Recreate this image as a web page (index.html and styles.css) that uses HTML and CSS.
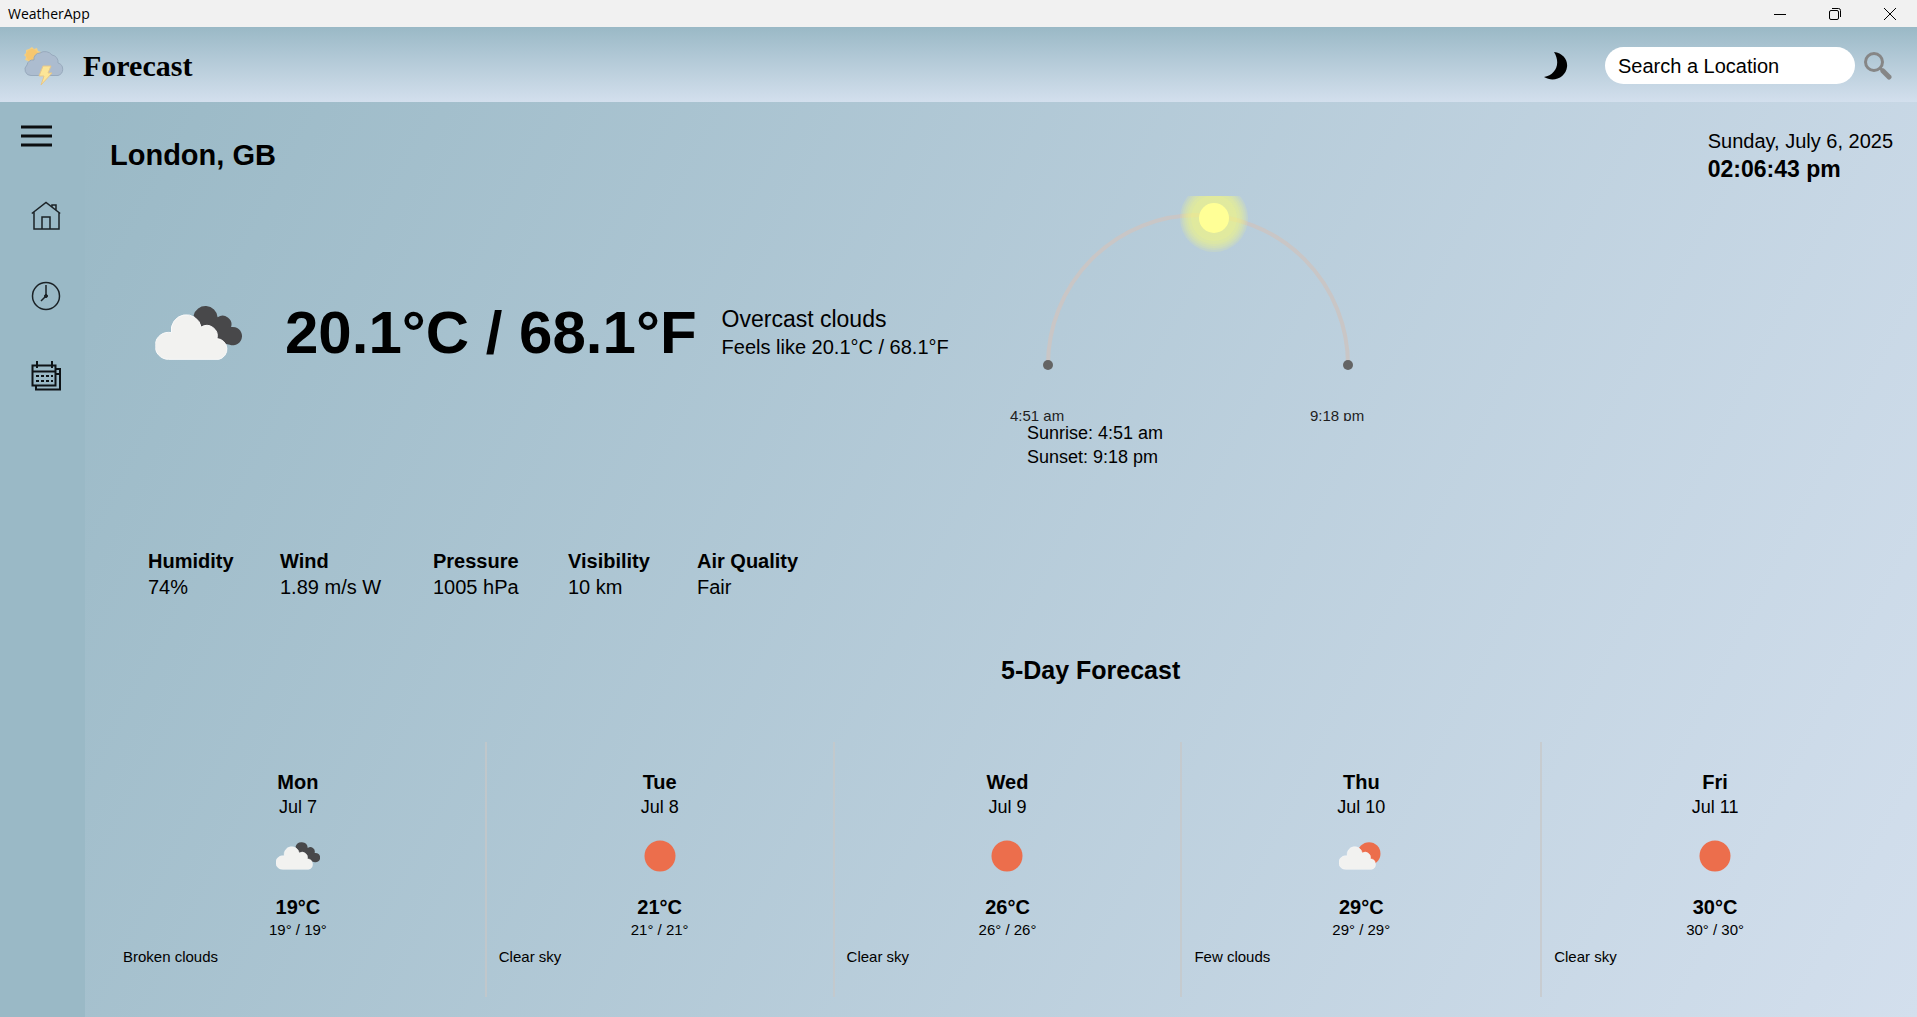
FILE: index.html
```html
<!DOCTYPE html>
<html lang="en">
<head>
<meta charset="utf-8">
<meta name="viewport" content="width=device-width, initial-scale=1">
<title>WeatherApp</title>
<link rel="stylesheet" href="styles.css">
</head>
<body>
<svg class="sprite" aria-hidden="true">
  <symbol id="white-cloud" viewBox="464 376 262 164">
    <path fill="#f2f2f0" stroke="#fafafa" stroke-width="3" d="M504 538A41 41 0 1 1 513 457A45.500 45.500 0 0 1 603 440A32 32 0 0 1 651 475A32 32 0 0 1 657 538Z"/>
  </symbol>
  <symbol id="broken-clouds" viewBox="464 376 262 164">
    <path fill="#48484a" d="M580 405A37 37 0 0 1 653 410A27 27 0 0 1 694 440A28 28 0 1 1 690 494L651 485L603 450Z"/>
    <use href="#white-cloud" x="464" y="376" width="262" height="164"/>
  </symbol>
  <symbol id="few-clouds" viewBox="464 376 262 164">
    <circle cx="643" cy="444" r="68" fill="#ec6e4c"/>
    <use href="#white-cloud" x="464" y="376" width="262" height="164"/>
  </symbol>
  <symbol id="clear-sky" viewBox="0 0 32 32">
    <circle cx="16" cy="16" r="15.500" fill="#ec6e4c"/>
  </symbol>
</svg>

<div class="titlebar">
  <span class="titlebar-name">WeatherApp</span>
  <div class="window-buttons">
    <button type="button" aria-label="Minimize"><svg width="14" height="14" viewBox="0 0 14 14"><path d="M1 7.500h12"/></svg></button>
    <button type="button" aria-label="Restore"><svg width="14" height="14" viewBox="0 0 14 14"><rect x="1.500" y="3.500" width="9" height="9" rx="1.500"/><path d="M4 1.500h6.500a2 2 0 0 1 2 2V10"/></svg></button>
    <button type="button" aria-label="Close"><svg width="14" height="14" viewBox="0 0 14 14"><path d="M1 1l12 12M13 1L1 13"/></svg></button>
  </div>
</div>

<header class="header">
  <svg class="logo" width="42" height="40" viewBox="0 0 42 40" aria-hidden="true">
    <path fill="#f3cf83" d="M9 1l2 2 3-1 1 3 3 1-1 3 2 2-3 2 0 3-3 0-2 3-2-2-3 1-1-3-3-1 1-3-2-2 2-2 0-3 3-1z"/>
    <circle cx="9" cy="9" r="6" fill="#f7c76f"/>
    <path fill="#acbccf" stroke="#98aabd" d="M8 29.500A6 6 0 0 1 4 19A6 6 0 0 1 11 14A6 6 0 0 1 17 7A9 9 0 0 1 29 9A7 7 0 0 1 35 17A6.500 6.500 0 0 1 35 29.500Z"/>
    <path fill="#fce597" stroke="#e6c78b" d="M20 20h8l-3 7h4L18 39l3-9h-5z"/>
  </svg>
  <h1 class="brand">Forecast</h1>
  <button type="button" class="theme-toggle" aria-label="Dark mode"><svg width="24" height="28" viewBox="0 0 24 28"><path d="M10 0C19 1 24 8 23 15C22 25 10 31 0 25C12 23 17 11 10 0Z"/></svg></button>
  <form class="search">
    <input type="text" aria-label="Search a Location" placeholder="Search a Location">
    <button type="button" aria-label="Search"><svg width="28" height="28" viewBox="0 0 28 28" fill="none" stroke="#868686"><circle cx="10" cy="10" r="8.500" stroke-width="3"/><path d="M16 16l3 3" stroke-width="3"/><path d="M19 19l6 6" stroke-width="5" stroke-linecap="round"/></svg></button>
  </form>
</header>

<div class="layout">
  <nav class="sidebar" aria-label="Sections">
    <button type="button" class="menu" aria-label="Menu"><svg width="31" height="24" viewBox="0 0 31 24"><path stroke="#0b0e10" stroke-width="3" d="M0 3h31M0 12h31M0 21h31"/></svg></button>
    <a href="#current" aria-label="Home"><svg width="30" height="30" viewBox="0 0 30 30" fill="none" stroke="#1b2226"><path stroke-width="1.500" d="M.8 12.500L15 1.500L29.200 12.500M3 11v17h25V11M11 28V16h8v12M21 6V4h4v5"/></svg></a>
    <a href="#stats" aria-label="Hourly"><svg width="30" height="30" viewBox="0 0 30 30" fill="none" stroke="#1b2226"><circle cx="15" cy="15" r="13.500" stroke-width="1.500"/><path stroke-width="1.500" d="M15 4v11l-5 5"/><circle cx="15" cy="15" r="1.500" fill="#1b2226"/></svg></a>
    <a href="#forecast" aria-label="Daily"><svg width="30" height="30" viewBox="0 0 30 30" fill="none" stroke="#0e1316" stroke-width="2"><path d="M1.500 4.500h23v20h-23zM1.500 10.500h23M6 0v7M21 0v7M25 8h4v20.500H5v-4M25 13h4"/><path stroke-dasharray="3 2" d="M5 15h17M5 20h17"/></svg></a>
  </nav>

  <main class="main">
    <div class="top">
      <h2 class="place">London, GB</h2>
      <div class="clock">
        <p class="date">Sunday, July 6, 2025</p>
        <p class="time">02:06:43 pm</p>
      </div>
    </div>

    <section class="current" id="current">
      <div class="now">
        <svg width="87" height="54" role="img" aria-label="Overcast clouds"><use href="#broken-clouds"/></svg>
        <p class="now-temp">20.1°C / 68.1°F</p>
        <div class="now-text">
          <p class="now-sky">Overcast clouds</p>
          <p class="now-feels">Feels like 20.1°C / 68.1°F</p>
        </div>
      </div>
      <div class="sun">
        <svg class="sun-path" width="380" height="225" viewBox="0 0 380 225">
          <path d="M47 169a150 150 0 0 1 300 0" fill="none" stroke="#c9c6c6" stroke-width="4"/>
          <circle cx="47" cy="169" r="5" fill="#646464"/>
          <circle cx="347" cy="169" r="5" fill="#646464"/>
          <g fill="#ffff78" fill-opacity="0.140">
            <circle cx="213" cy="22" r="34"/><circle cx="213" cy="22" r="32"/><circle cx="213" cy="22" r="30"/><circle cx="213" cy="22" r="28"/><circle cx="213" cy="22" r="26"/><circle cx="213" cy="22" r="23"/>
          </g>
          <circle cx="213" cy="22" r="15" fill="#ffff96"/>
          <text x="9" y="225">4:51 am</text>
          <text x="309" y="225">9:18 pm</text>
        </svg>
        <p class="sun-time">Sunrise: 4:51 am</p>
        <p class="sun-time">Sunset: 9:18 pm</p>
      </div>
    </section>

    <dl class="stats" id="stats">
      <div><dt>Humidity</dt><dd>74%</dd></div>
      <div><dt>Wind</dt><dd>1.89 m/s W</dd></div>
      <div><dt>Pressure</dt><dd>1005 hPa</dd></div>
      <div><dt>Visibility</dt><dd>10 km</dd></div>
      <div><dt>Air Quality</dt><dd>Fair</dd></div>
    </dl>

    <h2 class="forecast-title">5-Day Forecast</h2>
    <section class="forecast" id="forecast">
      <article class="day">
        <h3>Mon</h3><p class="day-date">Jul 7</p>
        <div class="day-icon"><svg width="44" height="28"><use href="#broken-clouds"/></svg></div>
        <p class="day-temp">19°C</p><p class="day-range">19° / 19°</p><p class="day-sky">Broken clouds</p>
      </article>
      <article class="day">
        <h3>Tue</h3><p class="day-date">Jul 8</p>
        <div class="day-icon"><svg width="32" height="32"><use href="#clear-sky"/></svg></div>
        <p class="day-temp">21°C</p><p class="day-range">21° / 21°</p><p class="day-sky">Clear sky</p>
      </article>
      <article class="day">
        <h3>Wed</h3><p class="day-date">Jul 9</p>
        <div class="day-icon"><svg width="32" height="32"><use href="#clear-sky"/></svg></div>
        <p class="day-temp">26°C</p><p class="day-range">26° / 26°</p><p class="day-sky">Clear sky</p>
      </article>
      <article class="day">
        <h3>Thu</h3><p class="day-date">Jul 10</p>
        <div class="day-icon"><svg width="44" height="28"><use href="#few-clouds"/></svg></div>
        <p class="day-temp">29°C</p><p class="day-range">29° / 29°</p><p class="day-sky">Few clouds</p>
      </article>
      <article class="day">
        <h3>Fri</h3><p class="day-date">Jul 11</p>
        <div class="day-icon"><svg width="32" height="32"><use href="#clear-sky"/></svg></div>
        <p class="day-temp">30°C</p><p class="day-range">30° / 30°</p><p class="day-sky">Clear sky</p>
      </article>
    </section>
  </main>
</div>
</body>
</html>
```
FILE: styles.css
```css
* { box-sizing: border-box; }

body {
  margin: 0;
  min-height: 100vh;
  display: flex;
  flex-direction: column;
  font-family: "Liberation Sans", Arial, sans-serif;
  font-size: 20px;
  line-height: 26px;
  color: #000;
}

h1, h2, h3, p, dl, dd { margin: 0; }
h3 { font-size: 20px; }
svg { display: block; }
button { border: 0; padding: 0; background: none; cursor: pointer; }

.sprite { display: none; }

/* Window frame */
.titlebar {
  height: 27px;
  flex: none;
  display: flex;
  align-items: center;
  justify-content: space-between;
  padding: 0 20px 0 8px;
  background: #f1f1f1;
}
.titlebar-name { font: 14px/20px "Open Sans", sans-serif; }
.window-buttons { display: flex; gap: 41px; }
.window-buttons svg { fill: none; stroke: #000; }

/* Header */
.header {
  height: 75px;
  flex: none;
  display: flex;
  align-items: center;
  padding: 2px 25px 0 23px;
  background: linear-gradient(#9ab9c6, #d3dfed);
}
.brand {
  margin-left: 18px;
  font: bold 30px/36px "Liberation Serif", "Times New Roman", serif;
}
.theme-toggle { margin-left: auto; margin-right: 37px; }
.search { display: flex; align-items: center; gap: 9px; }
.search input {
  width: 250px;
  height: 37px;
  border: 0;
  border-radius: 19px;
  padding: 2px 13px 0;
  font: 20px/26px "Liberation Sans", Arial, sans-serif;
  background: #fff;
}
.search input::placeholder { color: #000; opacity: 1; }

.layout { flex: 1; display: flex; }

/* Sidebar */
.sidebar {
  width: 85px;
  flex: none;
  display: flex;
  flex-direction: column;
  align-items: flex-start;
  gap: 50px;
  padding: 22px 0 0 31px;
  background: #9ab9c6;
}
.menu { margin: 0 0 3px -10px; }

/* Main area */
.main {
  flex: 1;
  display: flex;
  flex-direction: column;
  padding: 25px 24px 25px 24px;
  background: linear-gradient(117deg, #9ab9c6, #d3dfed);
}
.top {
  display: flex;
  align-items: center;
  justify-content: space-between;
}
.place { padding-left: 1px; font-size: 29px; line-height: 36px; }
.clock { line-height: 28px; }
.time { font-size: 23px; font-weight: bold; }

.current {
  display: grid;
  grid-template-columns: 1fr 1fr;
  align-items: center;
  margin-top: 13px;
}
.now {
  display: flex;
  align-items: center;
  padding-left: 46px;
  white-space: nowrap;
}
.now-temp {
  margin: 0 25px 0 43px;
  font-size: 60px;
  font-weight: bold;
  line-height: 64px;
}
.now-text { line-height: 28px; }
.now-sky { font-size: 23px; }
.sun-path text { font-size: 15px; fill: #1e1e1e; }
.sun-time { padding-left: 26px; font-size: 18px; line-height: 24px; }

.stats {
  display: grid;
  grid-template-columns: 132px 153px 135px 129px auto;
  justify-content: start;
  margin-top: 79px;
  padding-left: 39px;
}
.stats dt { font-weight: bold; }

.forecast-title {
  margin-top: 55px;
  padding-left: 50%;
  font-size: 25px;
  line-height: 30px;
}
.forecast {
  flex: 1;
  display: grid;
  grid-template-columns: 376fr 348fr 348fr 360fr 348fr;
  margin-top: 57px;
  margin-right: 5px;
}
.day {
  padding: 27px 0 30px;
  text-align: center;
  border-left: 2px solid transparent;
}
.day + .day { border-left-color: rgba(200, 200, 200, 0.7); }
.day-date { font-size: 18px; line-height: 24px; }
.day-icon {
  height: 50px;
  margin: 12px 0 13px;
  display: flex;
  align-items: center;
  justify-content: center;
}
.day-temp { font-weight: bold; }
.day-range, .day-sky { font-size: 15px; line-height: 20px; }
.day-sky { margin-top: 7px; padding-left: 12px; text-align: left; }
```
